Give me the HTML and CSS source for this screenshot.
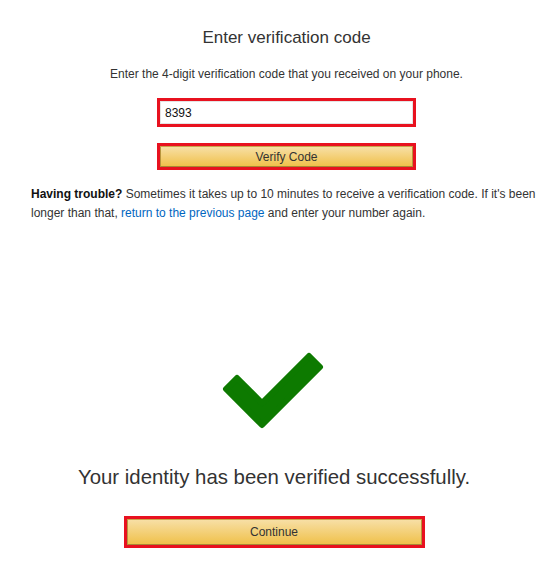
FILE: index.html
```html
<!DOCTYPE html>
<html>
<head>
<meta charset="utf-8">
<link rel="stylesheet" href="styles.css">
</head>
<body>
<div class="top">
  <h1 class="title">Enter verification code</h1>
  <p class="subtitle">Enter the 4-digit verification code that you received on your phone.</p>
  <div class="mark field-mark">
    <input class="code-input" type="text" value="8393">
  </div>
  <div class="mark btn-mark verify-mark">
    <button class="btn">Verify Code</button>
  </div>
  <p class="trouble"><b>Having trouble?</b> Sometimes it takes up to 10 minutes to receive a verification code. If it's been longer than that, <a href="#" class="link">return to the previous page</a> and enter your number again.</p>
</div>
<div class="bottom">
  <svg class="check" viewBox="214 345 120 92" width="120" height="92">
    <polygon points="237,378 262,403 309,356 320,367 262,425 226,389" fill="#0d7a00" stroke="#0d7a00" stroke-width="6" stroke-linejoin="round"/>
  </svg>
  <p class="success">Your identity has been verified successfully.</p>
  <div class="mark btn-mark continue-mark">
    <button class="btn btn-continue">Continue</button>
  </div>
</div>
</body>
</html>
```
FILE: styles.css
```css
html, body {
  margin: 0;
  padding: 0;
  background: #fff;
}
body {
  font-family: "Liberation Sans", Arial, sans-serif;
  color: #111;
  width: 557px;
  height: 564px;
  overflow: hidden;
}
.top {
  margin-left: 31px;
  width: 511px;
  display: flex;
  flex-direction: column;
  align-items: center;
}
.title {
  margin: 27px 0 0;
  font-size: 17px;
  line-height: 22px;
  font-weight: normal;
  color: #333;
}
.subtitle {
  margin: 17px 0 0;
  font-size: 12px;
  line-height: 16px;
  color: #333;
}
.mark {
  border: 3px solid #e8111f;
  box-sizing: border-box;
  display: flex;
}
.field-mark {
  margin-top: 16px;
  width: 259px;
  height: 29px;
}
.code-input {
  flex: 1;
  margin: 0;
  border: 1px solid #e4e4e4;
  box-sizing: border-box;
  padding: 0 4px;
  font-family: "Liberation Sans", Arial, sans-serif;
  font-size: 12px;
  color: #111;
  outline: none;
  background: #fff;
}
.verify-mark {
  margin-top: 16px;
  width: 259px;
  height: 27px;
}
.btn {
  flex: 1;
  margin: 0;
  padding: 0;
  border: 1px solid;
  border-color: #c9a54a #b8953d #a88734;
  background: linear-gradient(to bottom, #f7dfa5, #f0c14b);
  font-family: "Liberation Sans", Arial, sans-serif;
  font-size: 12px;
  color: #333;
  box-sizing: border-box;
}
.trouble {
  align-self: stretch;
  margin: 15px 0 0;
  font-size: 12px;
  line-height: 19px;
  color: #333;
}
.trouble b {
  color: #111;
}
.link {
  color: #0066c0;
  text-decoration: none;
}
.bottom {
  width: 548px;
  display: flex;
  flex-direction: column;
  align-items: center;
}
.check {
  display: block;
  margin-top: 122px;
}
.success {
  margin: 28px 0 0;
  font-size: 20.4px;
  line-height: 24px;
  color: #333;
}
.continue-mark {
  margin-top: 27px;
  width: 301px;
  height: 32px;
}
```
